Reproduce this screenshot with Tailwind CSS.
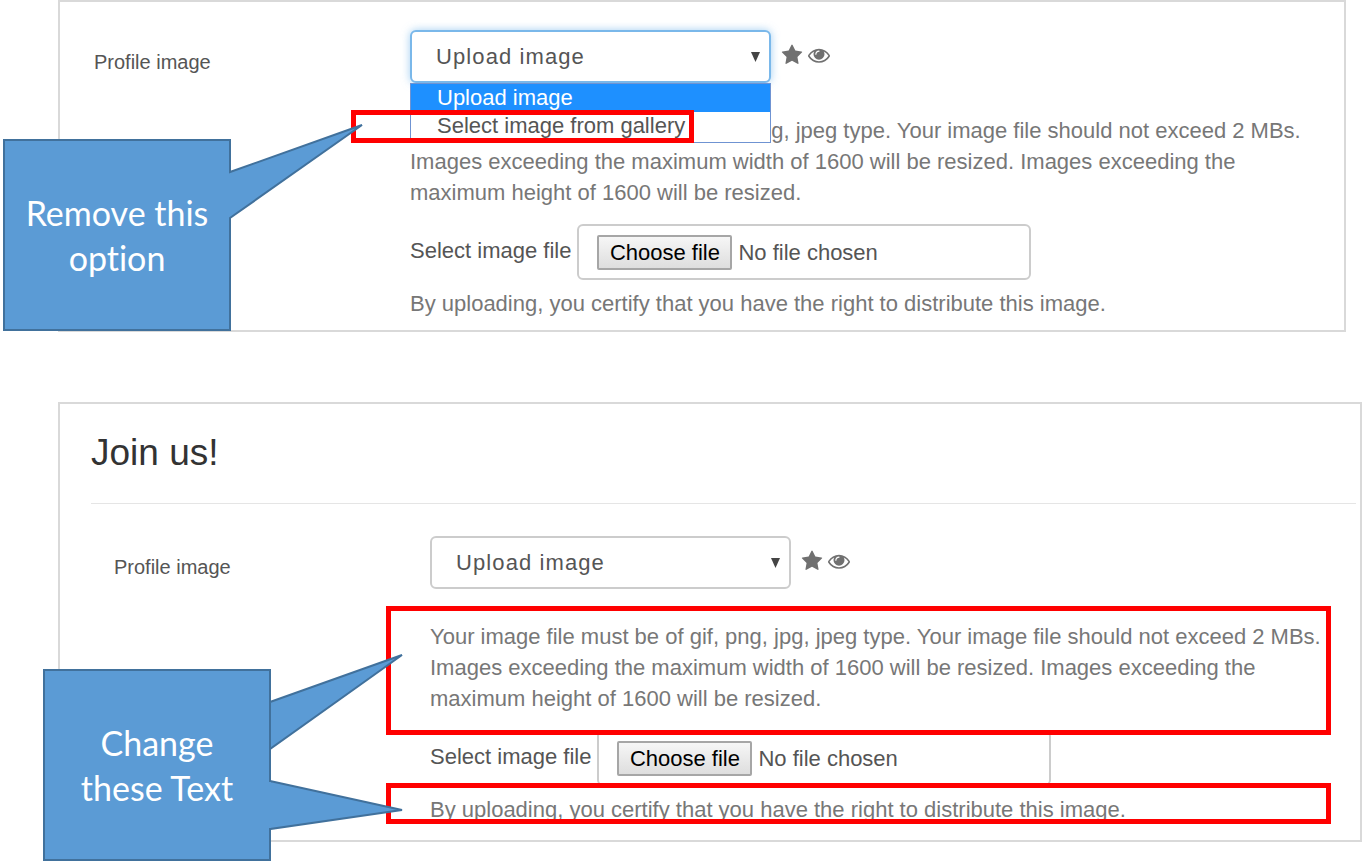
<!doctype html>
<html lang="en">

    <head>
        <meta charset="utf-8">
        <meta name="viewport" content="width=device-width, initial-scale=1">
        <title>Profile image</title>
        <script src="https://cdn.jsdelivr.net/npm/@tailwindcss/browser@4"></script>
    </head>

    <body class="bg-white font-['Liberation_Sans',Arial,sans-serif] text-[22px] leading-[31px] text-[#555]">
        <!-- shared icons -->
        <svg class="hidden">
            <symbol id="star" viewBox="0 0 1792 1792">
                <path fill="currentColor" d="M1728 647q0 22-26 48l-363 354 86 500q1 7 1 20 0 21-10.5 35.5t-30.5 14.5q-19 0-40-12l-449-236-449 236q-22 12-40 12-21 0-31.5-14.5t-10.5-35.5q0-6 2-20l86-500-364-354q-25-27-25-48 0-37 56-46l502-73 225-455q19-41 49-41t49 41l225 455 502 73q56 9 56 46z" />
            </symbol>
            <symbol id="eye" viewBox="0 0 1792 1792">
                <path fill="currentColor" d="M1664 960q-152-236-381-353 61 104 61 225 0 185-131.5 316.5t-316.5 131.5-316.5-131.5-131.5-316.5q0-121 61-225-229 117-381 353 133 205 333.5 326.5t434.5 121.5 434.5-121.5 333.5-326.5zm-720-384q0-20-14-34t-34-14q-125 0-214.5 89.5t-89.5 214.5q0 20 14 34t34 14 34-14 14-34q0-86 61-147t147-61q20 0 34-14t14-34zm848 384q0 34-20 69-140 230-376.5 368.5t-499.5 138.5-499.5-139-376.5-368q-20-35-20-69t20-69q140-229 376.5-368t499.5-139 499.5 139 376.5 368q20 35 20 69z" />
            </symbol>
        </svg>

        <main class="flex min-h-screen flex-col gap-[70px] pl-[58px]">
            <section class="relative mr-4 flex border-2 border-[#d9d9d9] pt-7 pr-4 pb-[11px] pl-[34px]">
                <label for="source1" class="mt-[17px] w-[316px] flex-none text-xl leading-[31px]">Profile image</label>

                <div class="min-w-0 flex-1">
                    <div class="flex items-center">
                        <div class="relative w-[361px]">
                            <select id="source1" class="block h-[53px] w-full appearance-none rounded-md border-2 border-[#7ab8ea] bg-white pl-6 tracking-wider shadow-[0_0_8px_rgba(102,175,233,0.6)] outline-none">
                                <option selected>Upload image</option>
                                <option>Select image from gallery</option>
                            </select>
                            <svg class="pointer-events-none absolute top-[22px] right-[11px] h-[10px] w-[9px]" viewBox="0 0 9 10"><path fill="#444" d="M0 0h9L4.500 10z" /></svg>

                            <!-- opened list -->
                            <ul role="listbox" aria-label="Profile image" class="absolute top-[53px] left-0 z-10 h-[60px] w-full border border-[#6f93d2] bg-white leading-[28px]">
                                <li role="option" aria-selected="true" class="bg-[#1e90ff] pl-[26px] text-white">Upload image</li>
                                <li role="option" aria-selected="false" class="pl-[26px]">Select image from gallery</li>
                            </ul>
                            <div class="absolute top-20 -left-[59px] z-20 h-[33px] w-[343px] border-5 border-[#f00]"></div>
                        </div>
                        <div class="flex gap-[5px] pb-[3px] pl-[10px] text-[#707070]">
                            <svg class="size-[22px]"><use href="#star" /></svg>
                            <svg class="size-[22px]"><use href="#eye" /></svg>
                        </div>
                    </div>

                    <p class="mt-8 max-w-[900px] text-[#777]">Your image file must be of gif, png, jpg, jpeg type. Your image file should not exceed 2 MBs. Images exceeding the maximum width of 1600 will be resized. Images exceeding the maximum height of 1600 will be resized.</p>

                    <div class="mt-4 flex items-center">
                        <label for="file1" class="mr-1.5 pb-[3px]">Select image file</label>
                        <div class="flex h-14 w-[454px] items-center rounded-md border-2 border-[#ccc] pl-[18px]">
                            <input id="file1" type="file" class="hidden">
                            <button type="button" onclick="file1.click()" class="mr-1.5 h-[35px] w-[135px] rounded-xs border-2 border-[#a6a6a6] bg-linear-to-b from-[#f6f6f6] to-[#dedede] text-black">Choose file</button>
                            <span>No file chosen</span>
                        </div>
                    </div>

                    <p class="mt-2 text-[#777]">By uploading, you certify that you have the right to distribute this image.</p>
                </div>

                <!-- callout -->
                <div class="absolute top-[137px] -left-[57px] z-30 flex h-[192px] w-[228px] items-center justify-center">
                    <svg class="absolute top-0 left-0 size-full overflow-visible"><path fill="#5b9bd5" stroke="#41719c" stroke-width="2" d="M1 1H227V33L359-14L227 79V191H1z" /></svg>
                    <p class="relative text-center font-[Lato,sans-serif] text-[34px] leading-[45px] text-white [font-variant-ligatures:none]">Remove this<br>option</p>
                </div>
            </section>

            <section class="relative border-2 border-[#d9d9d9] pt-[22px] pr-1 pb-[15px] pl-[31px]">
                <h1 class="border-b border-[#e5e5e5] pb-6 text-[37px] leading-[53px] text-[#333]">Join us!</h1>

                <div class="mt-8 flex pl-[23px]">
                    <label for="source2" class="mt-4 w-[316px] flex-none text-xl leading-[31px]">Profile image</label>

                    <div class="min-w-0 flex-1">
                        <div class="flex items-center">
                            <div class="relative w-[361px]">
                                <select id="source2" class="block h-[53px] w-full appearance-none rounded-md border-2 border-[#ccc] bg-white pl-6 tracking-wider outline-none">
                                    <option selected>Upload image</option>
                                    <option>Select image from gallery</option>
                                </select>
                                <svg class="pointer-events-none absolute top-[22px] right-[11px] h-[10px] w-[9px]" viewBox="0 0 9 10"><path fill="#444" d="M0 0h9L4.500 10z" /></svg>
                            </div>
                            <div class="flex gap-[5px] pb-[3px] pl-[10px] text-[#707070]">
                                <svg class="size-[22px]"><use href="#star" /></svg>
                                <svg class="size-[22px]"><use href="#eye" /></svg>
                            </div>
                        </div>

                        <div class="relative mt-8">
                            <p class="max-w-[900px] text-[#777]">Your image file must be of gif, png, jpg, jpeg type. Your image file should not exceed 2 MBs. Images exceeding the maximum width of 1600 will be resized. Images exceeding the maximum height of 1600 will be resized.</p>
                            <div class="absolute -top-[15px] -left-11 z-20 h-[129px] w-[945px] border-5 border-[#f00]"></div>
                        </div>

                        <div class="mt-4 flex items-center">
                            <label for="file2" class="mr-1.5 pb-[3px]">Select image file</label>
                            <div class="flex h-14 w-[454px] items-center rounded-md border-2 border-[#ccc] pl-[18px]">
                                <input id="file2" type="file" class="hidden">
                                <button type="button" onclick="file2.click()" class="mr-1.5 h-[35px] w-[135px] rounded-xs border-2 border-[#a6a6a6] bg-linear-to-b from-[#f6f6f6] to-[#dedede] text-black">Choose file</button>
                                <span>No file chosen</span>
                            </div>
                        </div>

                        <div class="relative mt-2">
                            <p class="text-[#777]">By uploading, you certify that you have the right to distribute this image.</p>
                            <div class="absolute -top-[11px] -left-11 z-20 h-[41px] w-[945px] border-5 border-[#f00]"></div>
                        </div>
                    </div>
                </div>

                <!-- callout with two pointers -->
                <div class="absolute top-[265px] -left-[17px] z-30 flex h-[192px] w-[228px] items-center justify-center">
                    <svg class="absolute top-0 left-0 size-full overflow-visible"><path fill="#5b9bd5" stroke="#41719c" stroke-width="2" d="M1 1H227V191H1zM227 33L359-14L227 80zM227 112L359 141L227 160z" /><path fill="#5b9bd5" d="M226 113h2v46h-2z" /></svg>
                    <p class="relative text-center font-[Lato,sans-serif] text-[34px] leading-[45px] text-white [font-variant-ligatures:none]">Change<br>these Text</p>
                </div>
            </section>
        </main>
    </body>

</html>
